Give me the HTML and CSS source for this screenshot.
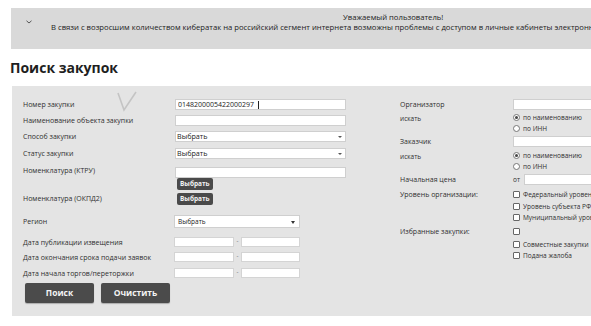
FILE: index.html
```html
<!DOCTYPE html>
<html lang="ru">
<head>
<meta charset="utf-8">
<title>Поиск закупок</title>
<link rel="stylesheet" href="styles.css">
</head>
<body>
<div class="banner">
  <svg class="chevron" width="6" height="4" viewBox="0 0 6 4"><polyline points="0.5,0.8 3,3 5.5,0.8" fill="none" stroke="#555" stroke-width="1"/></svg>
  <div class="banner-title">Уважаемый пользователь!</div>
  <div class="banner-text">В связи с возросшим количеством кибератак на российский сегмент интернета возможны проблемы с доступом в личные кабинеты электронных площадок.</div>
</div>
<h1 class="title">Поиск закупок</h1>
<div class="panel">
  <svg class="mark" width="22" height="22" viewBox="0 0 22 22"><polyline points="2,2 8,19 20,1" fill="none" stroke="#c4c4c4" stroke-width="1.6"/></svg>
  <div class="left">
    <div class="lbl">Номер закупки</div>
    <div class="field"><input class="inp" type="text" value="0148200005422000297"><span class="caret"></span></div>
    <div class="lbl">Наименование объекта закупки</div>
    <div class="field"><input class="inp" type="text"></div>
    <div class="lbl">Способ закупки</div>
    <div class="field"><div class="sel">Выбрать<span class="arrow"></span></div></div>
    <div class="lbl">Статус закупки</div>
    <div class="field"><div class="sel">Выбрать<span class="arrow"></span></div></div>
    <div class="lbl lbl-up">Номенклатура (КТРУ)</div>
    <div class="field"><input class="inp" type="text"></div>
    <div class="lbl"></div>
    <div class="field"><span class="btn-sm">Выбрать</span></div>
    <div class="lbl lbl-mid">Номенклатура (ОКПД2)</div>
    <div class="field"><span class="btn-sm">Выбрать</span></div>
    <div class="lbl lbl-region">Регион</div>
    <div class="field field-region"><div class="sel sel-region">Выбрать<span class="arrow"></span></div></div>
    <div class="lbl">Дата публикации извещения</div>
    <div class="field field-date"><input class="inp-date" type="text"><span class="dash">-</span><input class="inp-date" type="text"></div>
    <div class="lbl">Дата окончания срока подачи заявок</div>
    <div class="field field-date"><input class="inp-date" type="text"><span class="dash">-</span><input class="inp-date" type="text"></div>
    <div class="lbl">Дата начала торгов/переторжки</div>
    <div class="field field-date"><input class="inp-date" type="text"><span class="dash">-</span><input class="inp-date" type="text"></div>
    <div class="actions">
      <span class="btn">Поиск</span>
      <span class="btn">Очистить</span>
    </div>
  </div>
  <div class="right">
    <div class="row row-input">
      <div class="rlbl">Организатор</div>
      <input class="rinp" type="text">
    </div>
    <div class="row mt2">
      <div class="rlbl rlbl-sm">искать</div>
      <div class="opts">
        <div class="opt"><span class="radio on"></span>по наименованию</div>
        <div class="opt"><span class="radio"></span>по ИНН</div>
      </div>
    </div>
    <div class="row row-input mt2">
      <div class="rlbl">Заказчик</div>
      <input class="rinp" type="text">
    </div>
    <div class="row mt3">
      <div class="rlbl rlbl-sm">искать</div>
      <div class="opts">
        <div class="opt"><span class="radio on"></span>по наименованию</div>
        <div class="opt"><span class="radio"></span>по ИНН</div>
      </div>
    </div>
    <div class="row row-input mt2">
      <div class="rlbl">Начальная цена</div>
      <div class="price"><span class="from">от</span><input class="rinp rinp-price" type="text"></div>
    </div>
    <div class="row mt4">
      <div class="rlbl">Уровень организации:</div>
      <div class="opts opts-chk">
        <div class="opt"><span class="chk"></span>Федеральный уровень</div>
        <div class="opt"><span class="chk"></span>Уровень субъекта РФ</div>
        <div class="opt"><span class="chk"></span>Муниципальный уровень</div>
      </div>
    </div>
    <div class="row mt2">
      <div class="rlbl">Избранные закупки:</div>
      <div class="opts opts-chk">
        <div class="opt"><span class="chk"></span></div>
      </div>
    </div>
    <div class="row mt1">
      <div class="rlbl"></div>
      <div class="opts">
        <div class="opt"><span class="chk"></span>Совместные закупки</div>
        <div class="opt"><span class="chk"></span>Подана жалоба</div>
      </div>
    </div>
  </div>
</div>
</body>
</html>
```

FILE: styles.css
```css
html, body {
  margin: 0;
  padding: 0;
}
body {
  width: 591px;
  height: 326px;
  overflow: hidden;
  background: #ffffff;
  font-family: "Open Sans", "DejaVu Sans", sans-serif;
  color: #2f2f2f;
}

.banner {
  position: relative;
  margin: 8px 0 0 11px;
  height: 41px;
  padding-top: 4px;
  box-sizing: border-box;
  background: #d9d9d9;
  font-size: 7.7px;
  white-space: nowrap;
  color: #222;
}
.chevron {
  position: absolute;
  left: 15px;
  top: 12px;
}
.banner-title {
  margin-left: 332px;
  line-height: 10px;
}
.banner-text {
  margin-left: 40px;
  line-height: 10px;
}

.title {
  margin: 9px 0 8px 10px;
  font-size: 14px;
  line-height: 20px;
  font-weight: 700;
  color: #1e1e1e;
}

.panel {
  position: relative;
  display: flex;
  margin-left: 12px;
  height: 230px;
  box-sizing: border-box;
  padding: 13px 0 0 11px;
  background: #e4e4e4;
  font-size: 7px;
}
.mark {
  position: absolute;
  left: 104px;
  top: 5px;
}

.left {
  display: grid;
  grid-template-columns: 152px 171px;
  grid-template-rows: 16px 16px 17px 19px 11px 15px 22px 22px 15px 16px 15px 20px;
  flex: none;
}
.lbl {
  line-height: 11px;
  white-space: nowrap;
}
.lbl-up {
  line-height: 8px;
}
.lbl-mid {
  line-height: 12px;
}
.lbl-region {
  line-height: 13px;
}
.field {
  position: relative;
  display: flex;
  align-items: flex-start;
}
.inp {
  width: 171px;
  height: 11px;
  box-sizing: border-box;
  border: 1px solid #cfcfcf;
  background: #fff;
  padding: 0 0 0 2px;
  margin: 0;
  font-family: inherit;
  font-size: 7px;
  color: #222;
  outline: none;
}
.caret {
  position: absolute;
  left: 83px;
  top: 2px;
  width: 1px;
  height: 8px;
  background: #222;
}
.sel {
  position: relative;
  width: 171px;
  height: 11px;
  box-sizing: border-box;
  border: 1px solid #cfcfcf;
  background: #fff;
  padding-left: 1px;
  font-size: 7.2px;
  line-height: 9px;
  color: #222;
}
.arrow {
  position: absolute;
  right: 3px;
  top: 4px;
  width: 0;
  height: 0;
  border-left: 2px solid transparent;
  border-right: 2px solid transparent;
  border-top: 2px solid #555;
}
.field-region {
  margin-left: -1px;
}
.sel-region {
  width: 126px;
  height: 13px;
  line-height: 11px;
  font-size: 6.5px;
  padding-left: 3px;
}
.sel-region .arrow {
  top: 5px;
  right: 4px;
  border-left-width: 2.5px;
  border-right-width: 2.5px;
  border-top-width: 3px;
  border-top-color: #333;
}
.btn-sm {
  margin-left: 2px;
  display: inline-block;
  height: 12px;
  padding: 0 3px;
  border-radius: 2px;
  background: #4a4a4a;
  color: #f2f2f2;
  font-size: 6.5px;
  font-weight: 700;
  line-height: 12px;
}
.field-date {
  margin-left: -1px;
}
.inp-date {
  width: 60px;
  height: 10px;
  box-sizing: border-box;
  border: 1px solid #d4d4d4;
  background: #fff;
  margin: 0;
  padding: 0;
}
.dash {
  width: 7px;
  text-align: center;
  font-size: 6px;
  line-height: 9px;
  color: #555;
}
.field-date .inp-date:last-child {
  width: 59px;
}
.actions {
  grid-column: 1 / 3;
  display: flex;
  gap: 7px;
  padding-left: 2px;
}
.btn {
  width: 69px;
  height: 20px;
  border-radius: 2px;
  background: #4b4b4b;
  color: #f4f4f4;
  font-size: 8.5px;
  font-weight: 700;
  line-height: 20px;
  text-align: center;
  box-shadow: 0 1px 1px rgba(0,0,0,0.25);
}

.right {
  margin-left: 54px;
  display: flex;
  flex-direction: column;
  white-space: nowrap;
}
.row {
  display: flex;
  align-items: flex-start;
}
.mt1 { margin-top: 1.5px; }
.mt2 { margin-top: 2px; }
.mt3 { margin-top: 3px; }
.mt4 { margin-top: 4px; }
.row-input {
  height: 11px;
}
.rlbl {
  width: 113px;
  flex: none;
  line-height: 11px;
}
.rlbl-sm {
  font-size: 6.5px;
  padding-top: 1px;
  line-height: 11px;
}
.rinp {
  width: 100px;
  height: 11px;
  box-sizing: border-box;
  border: 1px solid #cfcfcf;
  background: #fff;
  margin: 0;
  padding: 0;
}
.price {
  display: flex;
  align-items: center;
}
.from {
  width: 11px;
  font-size: 6.5px;
}
.rinp-price {
  width: 90px;
}
.opts {
  display: flex;
  flex-direction: column;
}
.opt {
  display: flex;
  align-items: center;
  height: 11px;
  font-size: 6.5px;
}
.opts-chk .opt {
  height: 11.5px;
}
.radio {
  width: 5px;
  height: 5px;
  border: 1px solid #777;
  border-radius: 50%;
  background: #fff;
  margin-right: 3px;
  position: relative;
  flex: none;
}
.radio.on::after {
  content: "";
  position: absolute;
  left: 1px;
  top: 1px;
  width: 3px;
  height: 3px;
  border-radius: 50%;
  background: #444;
}
.chk {
  width: 5px;
  height: 5px;
  border: 1px solid #666;
  border-radius: 1px;
  background: #fff;
  margin-right: 3px;
  flex: none;
}
```
